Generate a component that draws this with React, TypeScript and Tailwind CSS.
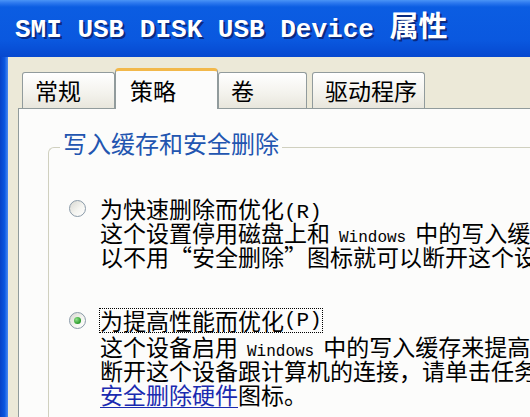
import React from "react";

const cjk = "font-['Noto_Sans_CJK_SC','Noto_Sans',sans-serif]";
const mono = "font-['Liberation_Mono',monospace]";

const Radio = ({ checked }: { checked?: boolean }) => (
  <span className="mt-[3.5px] ml-[20px] flex h-[17px] w-[17px] shrink-0 items-center justify-center rounded-full border border-[#8a9aa8] bg-[linear-gradient(135deg,#d8d8d2,#f4f4f0_55%,#ffffff)]">
    {checked && (
      <span className="h-[7px] w-[7px] rounded-full bg-[radial-gradient(circle_at_35%_35%,#8fe08a,#2a9a2a_70%)]" />
    )}
  </span>
);

const Tab = ({
  label,
  selected,
  className = "",
}: {
  label: string;
  selected?: boolean;
  className?: string;
}) =>
  selected ? (
    <div
      className={`relative z-10 -mb-px flex h-[41px] items-center rounded-t-[4px] border-x border-t-[3px] border-x-[#919b9c] border-t-[#f2b84a] bg-[#fcfcfb] pl-[14px] text-[23px] leading-none text-black ${className}`}
    >
      {label}
    </div>
  ) : (
    <div
      className={`flex h-[36px] items-center rounded-t-[3px] border-x border-t border-[#919b9c] bg-[linear-gradient(to_bottom,#ffffff,#f3f2ec_60%,#e8e6dc)] pl-[12px] text-[23px] leading-none text-black ${className}`}
    >
      {label}
    </div>
  );

// one text line of fixed height, so mixed fonts don't grow it
const Line = ({ children, className = "" }: { children: React.ReactNode; className?: string }) => (
  <div className={`h-[24px] leading-[24px] ${className}`}>{children}</div>
);

const Win = () => <span className={`${mono} px-[9px] text-[16px] leading-none`}>Windows</span>;

export default function App() {
  return (
    <div className={`flex h-[417px] w-[530px] flex-col overflow-hidden ${cjk}`}>
      {/* title bar */}
      <div className="flex h-[57px] shrink-0 items-center bg-[linear-gradient(to_bottom,#4a94f6_0px,#2c78ee_3px,#0b5de2_7px,#0a58df_40px,#0648cf_57px)] pl-[15px] pb-[5px]">
        <span className="whitespace-nowrap text-white [text-shadow:2px_2px_0_#0a2a80]">
          <span className={`${mono} text-[26px] font-bold`}>SMI USB DISK USB Device </span>
          <span className={`${cjk} text-[29px] font-bold`}>属性</span>
        </span>
      </div>

      <div className="flex min-h-0 flex-1">
        {/* left window frame */}
        <div className="w-[8px] shrink-0 bg-[linear-gradient(to_right,#0842c6,#0a56e0_55%,#4a8af2)]" />

        <div className="flex min-w-0 flex-1 flex-col bg-[#ece9d8] pl-[10px] pt-[11px]">
          {/* tabs */}
          <div className="flex h-[40px] shrink-0 items-end">
            <Tab label="常规" className="ml-[4px] w-[93px]" />
            <Tab label="策略" selected className="w-[103px]" />
            <Tab label="卷" className="w-[89px]" />
            <Tab label="驱动程序" className="ml-[5px] w-[113px] pl-[9px]" />
          </div>

          {/* panel */}
          <div className="min-h-0 flex-1 overflow-hidden border-l border-t border-[#919b9c] bg-[#fcfcfb]">
            <fieldset className="ml-[29px] mt-[22px] rounded-tl-[6px] border-l border-t border-[#d0d0bf] pb-[40px]">
              <legend className="ml-[11px] px-[3px] pb-[8px] text-[24px] leading-[24px] text-[#2255b0]">
                写入缓存和安全删除
              </legend>

              <div className="mt-[33px] flex items-start gap-[14px] whitespace-nowrap text-black">
                <Radio />
                <div className="text-[23px]">
                  <Line>
                    为快速删除而优化<span className={`${mono} text-[21px] leading-none`}>(R)</span>
                  </Line>
                  <Line>
                    这个设置停用磁盘上和<Win />中的写入缓存
                  </Line>
                  <Line>以不用“安全删除”图标就可以断开这个设备</Line>
                </div>
              </div>

              <div className="mt-[40px] flex items-start gap-[14px] whitespace-nowrap text-black">
                <Radio checked />
                <div className="text-[23px]">
                  <Line>
                    <span className="-ml-px inline-flex h-[25px] items-center border border-dotted border-black align-top leading-none">
                      为提高性能而优化<span className={`${mono} text-[21px]`}>(P)</span>
                    </span>
                  </Line>
                  <div className="mt-[2px]">
                    <Line>
                      这个设备启用<Win />中的写入缓存来提高
                    </Line>
                    <Line>断开这个设备跟计算机的连接，请单击任务栏</Line>
                    <Line>
                      <span className="text-[#1a2ab0] underline decoration-1 underline-offset-[3px]">安全删除硬件</span>图标。
                    </Line>
                  </div>
                </div>
              </div>
            </fieldset>
          </div>
        </div>
      </div>
    </div>
  );
}
